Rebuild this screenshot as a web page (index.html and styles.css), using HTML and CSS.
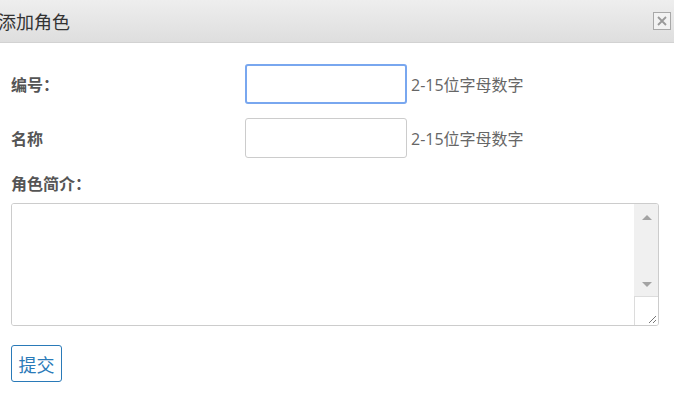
FILE: index.html
```html
<!DOCTYPE html>
<html lang="zh-CN">
<head>
    <meta charset="UTF-8">
    <title>添加角色</title>
    <link rel="stylesheet" href="styles.css">
</head>
<body>
    <div class="dialog-header">
        <span class="dialog-title">添加角色</span>
        <span class="dialog-close">
            <svg width="14" height="14" viewBox="0 0 14 14">
                <path d="M3 3 L11 11 M11 3 L3 11" stroke="#999" stroke-width="1.8" fill="none"/>
            </svg>
        </span>
    </div>
    <form class="role-form">
        <div class="form-row">
            <label class="form-label">编号：</label>
            <input type="text" class="form-input focused">
            <span class="form-hint">2-15位字母数字</span>
        </div>
        <div class="form-row">
            <label class="form-label">名称</label>
            <input type="text" class="form-input">
            <span class="form-hint">2-15位字母数字</span>
        </div>
        <label class="form-label block">角色简介：</label>
        <div class="textarea-box">
            <textarea class="form-textarea"></textarea>
            <div class="fake-scroll">
                <div class="scroll-track">
                    <span class="arrow-up"></span>
                    <span class="arrow-down"></span>
                </div>
                <div class="scroll-corner">
                    <svg width="8" height="8" viewBox="0 0 8 8">
                        <path d="M8 1 L1 8 M8 5 L5 8" stroke="#777" stroke-width="1" fill="none"/>
                    </svg>
                </div>
            </div>
        </div>
        <button type="button" class="submit-btn">提交</button>
    </form>
</body>
</html>
```

FILE: styles.css
```css
body {
    margin: 0;
    font-family: "Open Sans", "Noto Sans CJK SC", sans-serif;
    color: #555;
    background: #fff;
}
.dialog-header {
    height: 42px;
    display: flex;
    align-items: center;
    justify-content: space-between;
    background: linear-gradient(#eeeeee, #dedede);
    border-bottom: 1px solid #d2d2d2;
}
.dialog-title {
    margin-left: -2px;
    font-size: 18px;
    color: #333;
    font-family: "Noto Sans CJK SC", sans-serif;
}
.dialog-close {
    width: 16px;
    height: 16px;
    margin-right: 3px;
    margin-top: -1px;
    border: 1px solid #a8a8a8;
    background: #f2f2f2;
    display: flex;
    align-items: center;
    justify-content: center;
}
.role-form {
    padding: 21px 15px 0 11px;
}
.form-row {
    display: flex;
    align-items: center;
    margin-bottom: 14px;
}
.form-label {
    width: 234px;
    font-size: 16px;
    font-weight: bold;
    color: #555;
    font-family: "Noto Sans CJK SC", sans-serif;
}
.form-label.block {
    display: block;
    line-height: 22px;
}
.form-input {
    width: 162px;
    height: 40px;
    box-sizing: border-box;
    border: 1px solid #ccc;
    border-radius: 3px;
    padding: 0 6px;
    outline: none;
}
.form-input.focused {
    border: 2px solid #79a7ef;
}
.form-hint {
    margin-left: 4px;
    font-size: 16px;
    color: #666;
}
.textarea-box {
    display: flex;
    height: 123px;
    box-sizing: border-box;
    margin-top: 9px;
    border: 1px solid #ccc;
    border-radius: 3px;
    overflow: hidden;
}
.form-textarea {
    flex: 1;
    border: none;
    outline: none;
    resize: none;
    padding: 2px;
}
.fake-scroll {
    width: 24px;
    display: flex;
    flex-direction: column;
}
.scroll-track {
    flex: 1;
    background: #f0f0f0;
    display: flex;
    flex-direction: column;
    align-items: center;
    justify-content: space-between;
    padding: 11px 0 9px 1px;
}
.arrow-up {
    width: 0;
    height: 0;
    border-left: 5px solid transparent;
    border-right: 5px solid transparent;
    border-bottom: 5px solid #a3a3a3;
}
.arrow-down {
    width: 0;
    height: 0;
    border-left: 5px solid transparent;
    border-right: 5px solid transparent;
    border-top: 5px solid #a3a3a3;
}
.scroll-corner {
    height: 26px;
    background: #fff;
    border-top: 1px solid #dcdcdc;
    border-left: 1px solid #dcdcdc;
    display: flex;
    align-items: flex-end;
    justify-content: flex-end;
    padding: 0 2px 2px 0;
}
.submit-btn {
    margin-top: 19px;
    width: 51px;
    height: 37px;
    padding: 0;
    border: 1px solid #2a7ab8;
    border-radius: 3px;
    background: #fff;
    color: #2a7ab8;
    font-size: 18px;
    font-family: "Noto Sans CJK SC", sans-serif;
}
```
